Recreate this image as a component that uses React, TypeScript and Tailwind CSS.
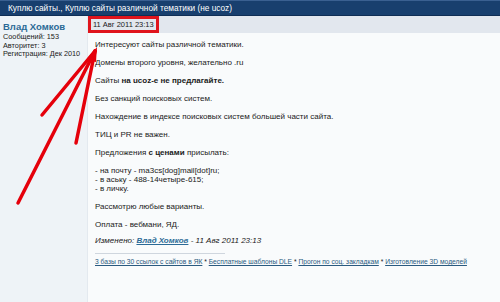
export default function App() {
  const links = [
    '3 базы по 30 ссылок с сайтов в ЯК',
    'Бесплатные шаблоны DLE',
    'Прогон по соц. закладкам',
    'Изготовление 3D моделей',
  ];

  return (
    <div className="relative w-[500px] h-[302px] overflow-hidden bg-[#f9fbfc] text-[#1a1a1a] font-['Liberation_Sans',Arial,sans-serif]">
      {/* topic title bar */}
      <div className="h-[16px] bg-[#183f6e] border-t border-[#3a6091] border-b border-b-[#0f2e55] flex items-center pl-[8px] text-white text-[8.3px] leading-none">
        Куплю сайты., Куплю сайты различной тематики (не ucoz)
      </div>

      <div className="flex h-[286px]">
        {/* author column */}
        <div className="w-[88px] shrink-0 bg-[#eef3f7] border-r border-[#e3e9ef] pl-[3px] pt-[5px] text-[7.3px] leading-[8.5px]">
          <div className="text-[#2b6a96] font-bold text-[9.5px] leading-[11px] mb-[1px]">Влад Хомков</div>
          <div>Сообщений: 153</div>
          <div>Авторитет: 3</div>
          <div>Регистрация: Дек 2010</div>
        </div>

        {/* message column */}
        <div className="flex-1 flex flex-col">
          <div className="h-[17px] bg-[#e2e7ee] flex items-stretch">
            <div className="border-[3px] border-[#e0141c] px-[2px] flex items-center text-[7.5px] leading-none whitespace-nowrap">
              11 Авг 2011 23:13
            </div>
          </div>

          <div className="pl-[7px] pt-[7px] text-[8px] leading-[9px] flex flex-col gap-[9px]">
            <p>Интересуют сайты различной тематики.</p>
            <p>Домены второго уровня, желательно .ru</p>
            <p>
              Сайты <b>на ucoz-е не предлагайте.</b>
            </p>
            <p>Без санкций поисковых систем.</p>
            <p>Нахождение в индексе поисковых систем большей части сайта.</p>
            <p>ТИЦ и PR не важен.</p>
            <p>
              Предложения <b>с ценами</b> присылать:
            </p>
            <div>
              <p>- на почту - ma3cs[dog]mail[dot]ru;</p>
              <p>- в аську - 488-14четыре-615;</p>
              <p>- в личку.</p>
            </div>
            <p>Рассмотрю любые варианты.</p>
            <p>Оплата - вебмани, ЯД.</p>
          </div>

          <div className="pl-[7px] mt-[7px] text-[8px] leading-[9px] italic">
            Изменено: <span className="font-bold underline text-[#2b6a96]">Влад Хомков</span> - 11 Авг 2011 23:13
          </div>

          <div className="ml-[7px] mt-[8px] w-[130px] border-t border-[#cfd6de]" />

          <div className="pl-[7px] mt-[3px] text-[6.7px] leading-[9px] text-[#2a5a80] whitespace-nowrap">
            {links.map((l, i) => (
              <span key={l}>
                <span className="underline">{l}</span>
                {i < links.length - 1 && <span className="text-[#1a1a1a]"> * </span>}
              </span>
            ))}
          </div>
        </div>
      </div>

      {/* red arrows drawn over the post */}
      <svg className="absolute left-0 top-0 pointer-events-none" width="500" height="302">
        <g stroke="#e5000b" strokeWidth="3.5" strokeLinecap="round" fill="none">
          <line x1="95" y1="51" x2="42" y2="115" />
          <line x1="95" y1="51" x2="76" y2="143" />
          <line x1="95" y1="51" x2="18" y2="203" />
        </g>
        <polygon points="97,47 86,60 96,62" fill="#e5000b" />
      </svg>
    </div>
  );
}
